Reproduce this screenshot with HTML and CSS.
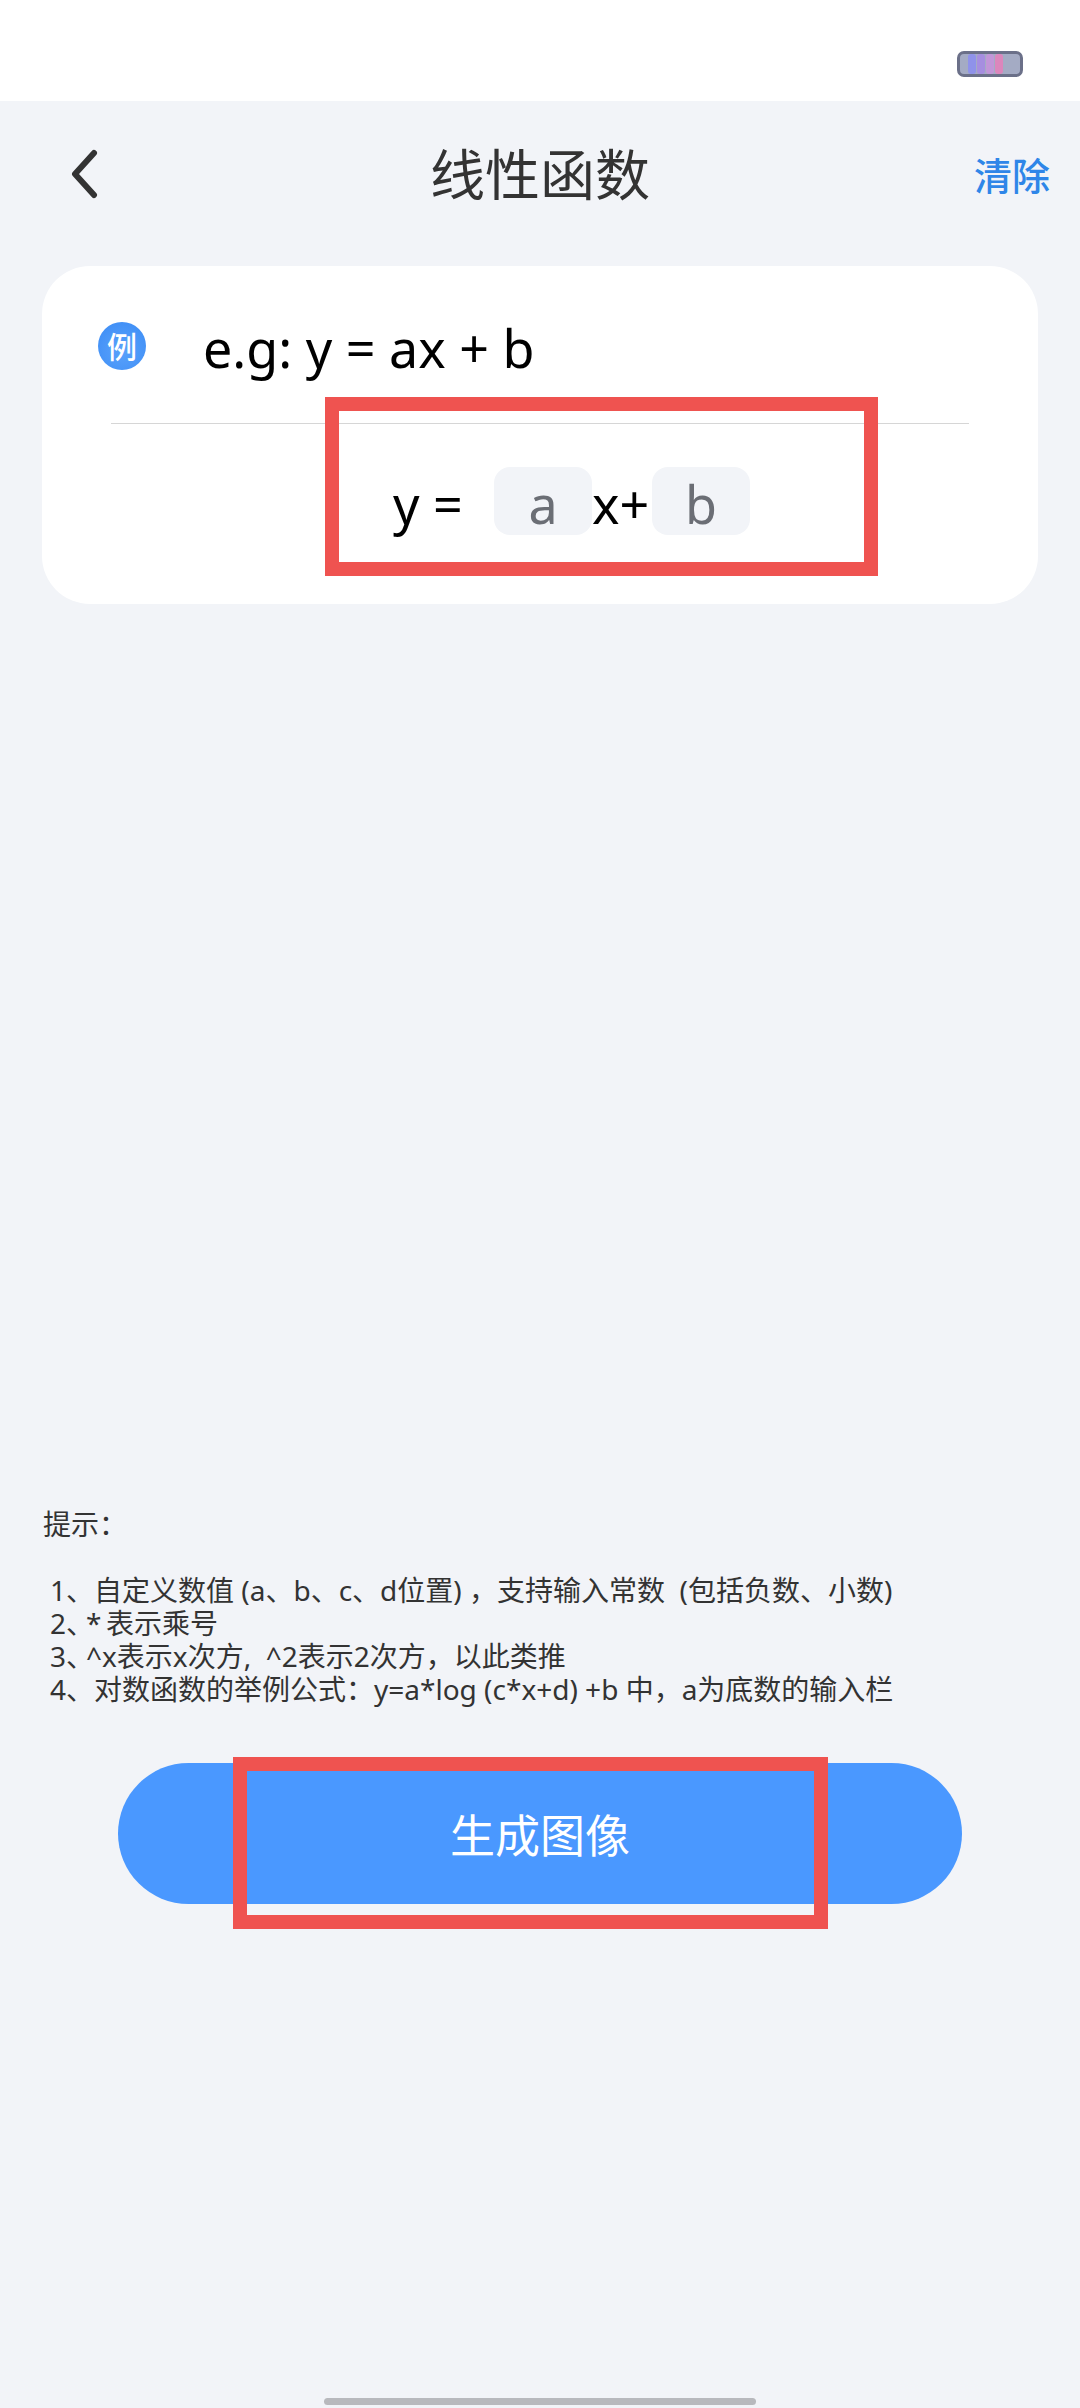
FILE: index.html
```html
<!DOCTYPE html>
<html lang="zh-CN">
<head>
<meta charset="utf-8">
<title>线性函数</title>
<link rel="stylesheet" href="styles.css">
</head>
<body>
<div class="page">
  <header class="status">
    <div class="battery"><i class="s1"></i><i class="s2"></i><i class="s3"></i><i class="s4"></i></div>
  </header>
  <nav class="nav">
    <svg class="back" viewBox="0 0 28 50" width="28" height="50"><path d="M24 4 L5 25 L24 46" fill="none" stroke="#333" stroke-width="6" stroke-linecap="round" stroke-linejoin="round"/></svg>
    <h1 class="title">线性函数</h1>
    <span class="clear">清除</span>
  </nav>
  <section class="card">
    <div class="example">
      <span class="badge">例</span>
      <span class="eg">e.g: y = ax + b</span>
    </div>
    <div class="divider"></div>
    <div class="formula">
      <span class="y">y =</span>
      <span class="input">a</span>
      <span class="x">x+</span>
      <span class="input">b</span>
    </div>
  </section>
  <section class="hint">
    <p class="hint-title">提示：</p>
    <ol class="hint-list">
      <li>1、自定义数值 (a、b、c、d位置) ，支持输入常数 &nbsp;(包括负数、小数)</li>
      <li><span class="tight">2、</span>*&thinsp;表示乘号</li>
      <li><span class="tight">3、</span>^x表示x次方,&nbsp; ^2表示2次方，以此类推</li>
      <li>4、对数函数的举例公式：y=a*log (c*x+d) +b 中，a为底数的输入栏</li>
    </ol>
  </section>
  <button class="generate">生成图像</button>
  <div class="home"></div>
  <div class="mark mark-formula"></div>
  <div class="mark mark-button"></div>
</div>
</body>
</html>
```
FILE: styles.css
```css
* { box-sizing: border-box; margin: 0; padding: 0; }
html, body { width: 1080px; height: 2408px; overflow: hidden; }
body { font-family: "Noto Sans", "Noto Sans CJK SC", sans-serif; background: #f2f4f8; }
.page { position: relative; width: 1080px; height: 2408px; display: flex; flex-direction: column; background: #f2f4f8; }

.status { height: 101px; background: #fff; display: flex; justify-content: flex-end; align-items: flex-start; padding: 51px 57px 0 0; }
.battery { width: 66px; height: 26px; border: 3px solid #6b7089; border-radius: 7px; background: #a4abc4; display: flex; padding: 0 0 0 8px; gap: 1px; }
.battery i { display: block; width: 8px; border-radius: 3px; }
.battery .s1 { background: #8f92ea; }
.battery .s2 { background: #a68ee0; }
.battery .s3 { background: #c296d8; }
.battery .s4 { background: #dc86bc; }

.nav { height: 165px; display: grid; grid-template-columns: 1fr auto 1fr; align-items: flex-start; padding: 46px 30px 0 30px; }
.back { margin: 2px 0 0 40px; }
.title { font-size: 55px; font-weight: 400; line-height: 54px; color: #333; font-family: "Noto Sans CJK SC", sans-serif; margin-top: -3px; }
.clear { font-size: 38px; font-weight: 500; line-height: 54px; color: #2f86e8; justify-self: end; font-family: "Noto Sans CJK SC", sans-serif; }

.card { width: 996px; height: 338px; margin-left: 42px; background: #fff; border-radius: 48px; }
.example { height: 157px; display: flex; align-items: flex-start; padding: 56px 0 0 56px; }
.badge { width: 48px; height: 48px; border-radius: 50%; background: radial-gradient(circle at 50% 60%, #5aa2fb, #3a8bf5); color: #fff; font-size: 30px; font-weight: 500; line-height: 46px; text-align: center; font-family: "Noto Sans CJK SC", sans-serif; }
.eg { margin-left: 57px; font-size: 52px; line-height: 52px; color: #000; white-space: nowrap; }
.divider { height: 1px; margin: 0 69px; background: #d6d6d6; }
.formula { display: flex; align-items: flex-start; margin: 43px 0 0 351px; font-size: 52px; line-height: 73px; color: #000; }
.y { width: 101px; }
.x { width: 60px; }
.input { width: 98px; height: 68px; border-radius: 16px; background: #f2f4f8; color: #6b6e75; text-align: center; }

.hint { margin-top: 904px; padding-left: 43px; color: #333; font-size: 28px; line-height: 33px; font-family: "Noto Sans", "Noto Sans CJK SC", sans-serif; }
.hint-title { height: 66px; }
.hint-list { list-style: none; padding-left: 7px; }
.tight { font-feature-settings: "halt"; margin-right: 6px; }

.generate { display: block; width: 844px; height: 141px; margin: 57px 0 0 118px; border: 0; border-radius: 71px; background: #4a98ff; color: #fff; font-size: 45px; font-family: "Noto Sans CJK SC", sans-serif; }

.home { width: 432px; height: 7px; margin: auto 0 3px 324px; border-radius: 4px; background: #b8b9bd; }

.mark { position: absolute; border: 14px solid #ef5350; }
.mark-formula { left: 325px; top: 397px; width: 553px; height: 179px; }
.mark-button { left: 233px; top: 1757px; width: 595px; height: 172px; }
```
